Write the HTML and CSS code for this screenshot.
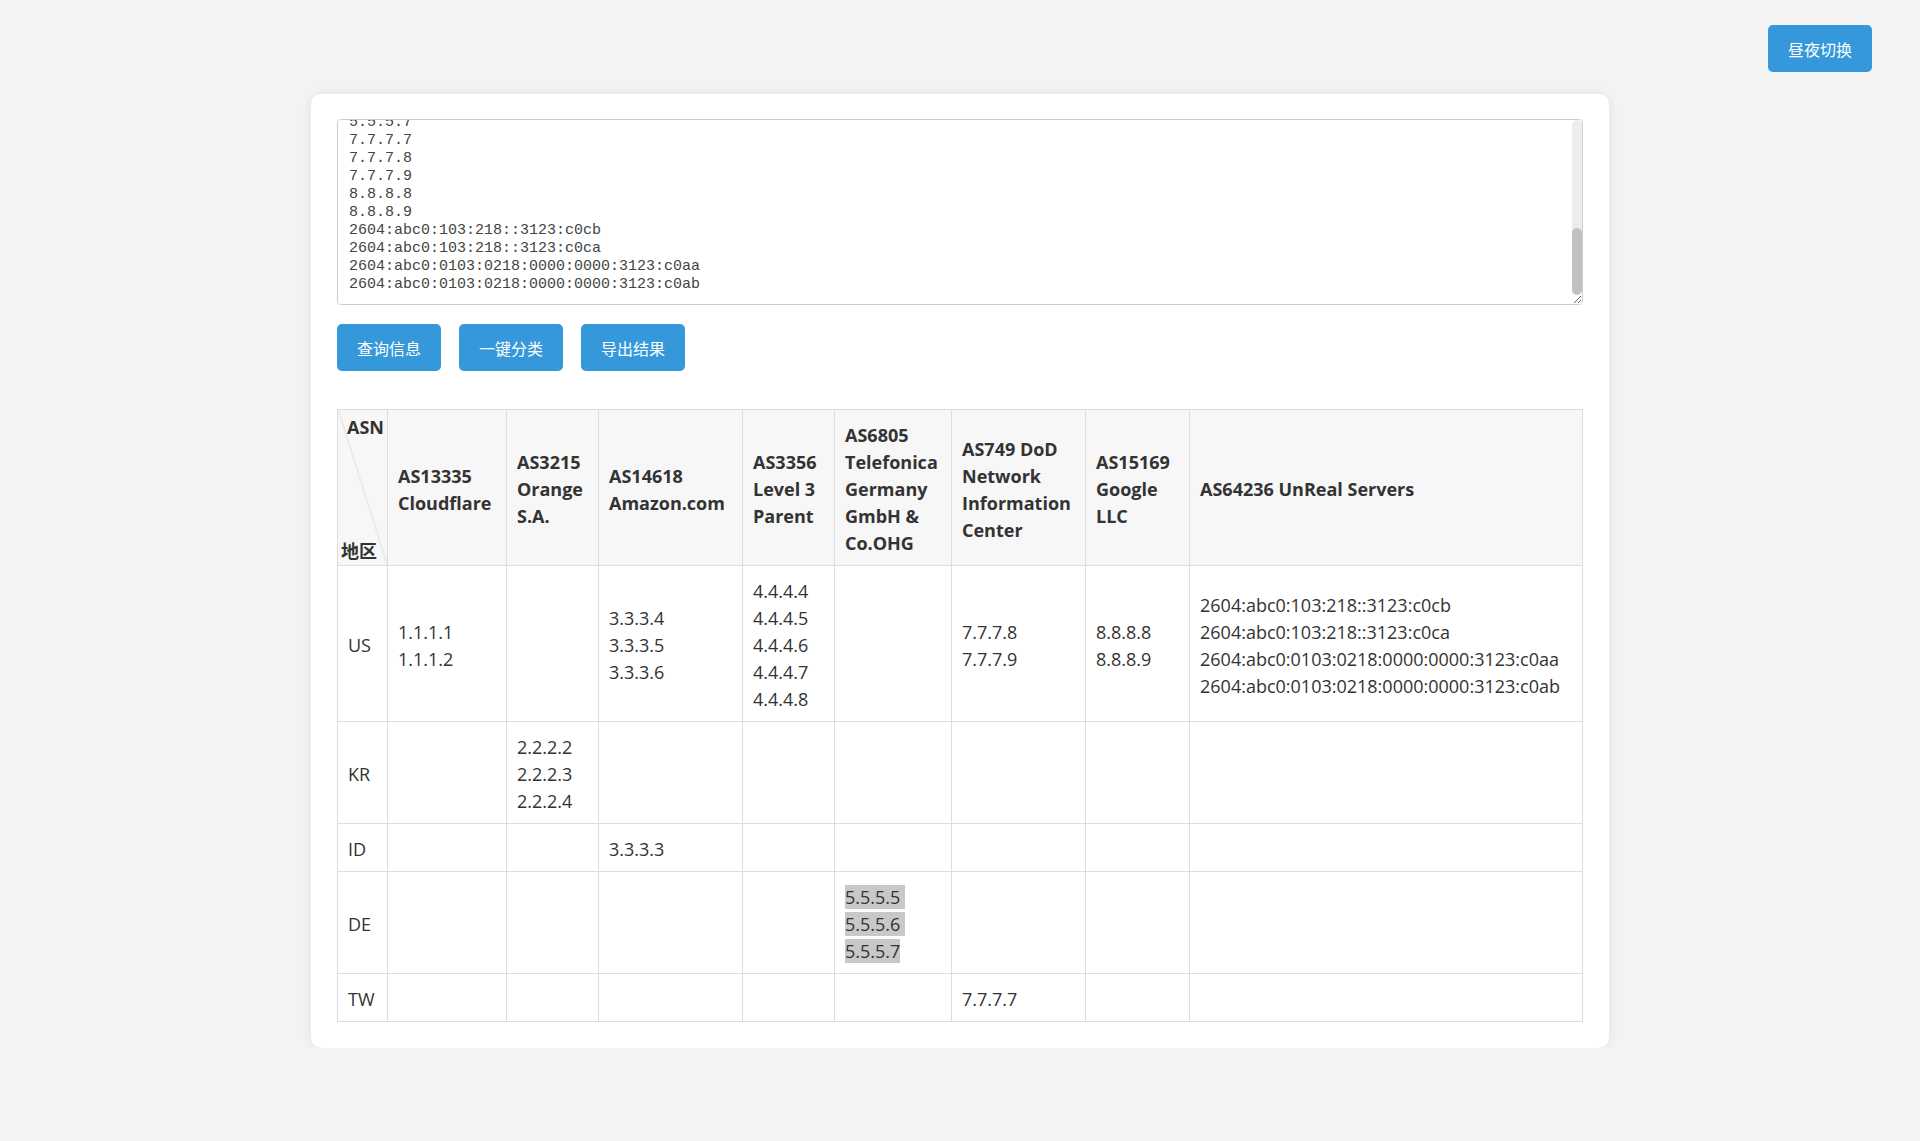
FILE: index.html
```html
<!DOCTYPE html>
<html lang="zh-CN">
<head>
    <meta charset="UTF-8">
    <meta name="viewport" content="width=device-width, initial-scale=1.0">
    <title>ASN 分类</title>
    <link rel="stylesheet" href="styles.css">
</head>
<body>
    <!-- 顶部：主题切换 -->
    <div class="top-bar">
        <button class="btn" onclick="toggleTheme()">昼夜切换</button>
    </div>

    <div class="container">
        <div class="input-wrap">
            <textarea id="ipInput" class="ip-input" spellcheck="false">1.1.1.1
1.1.1.2
2.2.2.2
2.2.2.3
2.2.2.4
3.3.3.3
3.3.3.4
3.3.3.5
3.3.3.6
4.4.4.4
4.4.4.5
4.4.4.6
4.4.4.7
4.4.4.8
5.5.5.5
5.5.5.6
5.5.5.7
7.7.7.7
7.7.7.8
7.7.7.9
8.8.8.8
8.8.8.9
2604:abc0:103:218::3123:c0cb
2604:abc0:103:218::3123:c0ca
2604:abc0:0103:0218:0000:0000:3123:c0aa
2604:abc0:0103:0218:0000:0000:3123:c0ab</textarea>
            <!-- 滚动条 -->
            <div class="scroll-track" aria-hidden="true">
                <div class="scroll-thumb"></div>
            </div>
        </div>

        <div class="actions">
            <button class="btn">查询信息</button>
            <button class="btn">一键分类</button>
            <button class="btn">导出结果</button>
        </div>

        <table class="result-table">
            <colgroup>
                <col class="col-area">
                <col class="col-w119">
                <col class="col-w92">
                <col class="col-w144">
                <col class="col-w92">
                <col class="col-w117">
                <col class="col-w134">
                <col class="col-w104">
                <col>
            </colgroup>
            <thead>
                <tr>
                    <th class="corner">
                        <div class="corner-inner">
                            <span class="corner-asn">ASN</span>
                            <span class="corner-area">地区</span>
                        </div>
                    </th>
                    <th>AS13335 Cloudflare</th>
                    <th>AS3215 Orange S.A.</th>
                    <th>AS14618 Amazon.com</th>
                    <th>AS3356 Level 3 Parent</th>
                    <th>AS6805 Telefonica Germany GmbH &amp; Co.OHG</th>
                    <th>AS749 DoD Network Information Center</th>
                    <th>AS15169 Google LLC</th>
                    <th>AS64236 UnReal Servers</th>
                </tr>
            </thead>
            <tbody>
                <tr>
                    <td>US</td>
                    <td>1.1.1.1<br>1.1.1.2</td>
                    <td></td>
                    <td>3.3.3.4<br>3.3.3.5<br>3.3.3.6</td>
                    <td>4.4.4.4<br>4.4.4.5<br>4.4.4.6<br>4.4.4.7<br>4.4.4.8</td>
                    <td></td>
                    <td>7.7.7.8<br>7.7.7.9</td>
                    <td>8.8.8.8<br>8.8.8.9</td>
                    <td>2604:abc0:103:218::3123:c0cb<br>2604:abc0:103:218::3123:c0ca<br>2604:abc0:0103:0218:0000:0000:3123:c0aa<br>2604:abc0:0103:0218:0000:0000:3123:c0ab</td>
                </tr>
                <tr>
                    <td>KR</td>
                    <td></td>
                    <td>2.2.2.2<br>2.2.2.3<br>2.2.2.4</td>
                    <td></td>
                    <td></td>
                    <td></td>
                    <td></td>
                    <td></td>
                    <td></td>
                </tr>
                <tr>
                    <td>ID</td>
                    <td></td>
                    <td></td>
                    <td>3.3.3.3</td>
                    <td></td>
                    <td></td>
                    <td></td>
                    <td></td>
                    <td></td>
                </tr>
                <tr>
                    <td>DE</td>
                    <td></td>
                    <td></td>
                    <td></td>
                    <td></td>
                    <td><span class="picked nl">5.5.5.5</span><br><span class="picked nl">5.5.5.6</span><br><span class="picked">5.5.5.7</span></td>
                    <td></td>
                    <td></td>
                    <td></td>
                </tr>
                <tr>
                    <td>TW</td>
                    <td></td>
                    <td></td>
                    <td></td>
                    <td></td>
                    <td></td>
                    <td>7.7.7.7</td>
                    <td></td>
                    <td></td>
                </tr>
            </tbody>
        </table>
    </div>

    <script>
        // 切换昼夜主题
        function toggleTheme() {
            document.body.classList.toggle("dark");
        }

        // 输入框滚动到最后一行
        const ipInput = document.getElementById("ipInput");
        ipInput.scrollTop = ipInput.scrollHeight;
    </script>
</body>
</html>
```

FILE: styles.css
```css
* {
    box-sizing: border-box;
}

body {
    margin: 0;
    background-color: #f3f3f3;
    font-family: "Open Sans", "Noto Sans CJK SC", sans-serif;
    color: #333;
}

/* 按钮 */
.btn {
    height: 47px;
    padding: 0 20px;
    background-color: #3498db;
    color: #fff;
    border: none;
    border-radius: 5px;
    font-family: "Noto Sans CJK SC", sans-serif;
    font-size: 16px;
    cursor: pointer;
}

.top-bar {
    display: flex;
    justify-content: flex-end;
    padding: 25px 48px 0;
}

.top-bar .btn {
    width: 104px;
}

/* 主体卡片 */
.container {
    width: 1298px;
    margin: 22px auto 0;
    padding: 25px 26px 26px;
    background: #fff;
    border-radius: 10px;
    box-shadow: 0 0 10px rgba(0, 0, 0, 0.08);
}

.input-wrap {
    position: relative;
}

.ip-input {
    display: block;
    width: 100%;
    height: 186px;
    padding: 8px 10px 10px 11px;
    border: 1px solid #ccc;
    border-radius: 4px;
    font-family: "Liberation Mono", monospace;
    font-size: 15px;
    line-height: 18px;
    color: #444;
    resize: vertical;
    outline: none;
}

.scroll-track {
    position: absolute;
    top: 1px;
    right: 1px;
    bottom: 10px;
    width: 10px;
    background: #ededed;
    border-radius: 5px;
}

.scroll-thumb {
    position: absolute;
    left: 0;
    right: 0;
    bottom: 0;
    height: 67px;
    background: #c1c1c1;
    border-radius: 5px;
}

.actions {
    display: flex;
    gap: 18px;
    margin-top: 19px;
}

.actions .btn {
    width: 104px;
}

/* 结果表格 */
.result-table {
    width: 100%;
    margin-top: 38px;
    border-collapse: collapse;
    table-layout: fixed;
    font-size: 18px;
    line-height: 27px;
}

.col-area { width: 50px; }
.col-w119 { width: 119px; }
.col-w92 { width: 92px; }
.col-w144 { width: 144px; }
.col-w117 { width: 117px; }
.col-w134 { width: 134px; }
.col-w104 { width: 104px; }

.result-table th,
.result-table td {
    border: 1px solid #ddd;
    padding: 12px 10px 8px;
    text-align: left;
    vertical-align: middle;
    word-wrap: break-word;
}

.result-table th {
    background-color: #f7f7f7;
    font-weight: 700;
}

/* 左上角斜线表头 */
.result-table th.corner {
    padding: 5px 3px 2px;
    background: linear-gradient(to top right, #f7f7f7 calc(50% - 0.7px), #d6d6d6 50%, #f7f7f7 calc(50% + 0.7px));
}

.corner-inner {
    display: flex;
    flex-direction: column;
    justify-content: space-between;
    height: 146px;
    line-height: 22px;
}

.corner-asn {
    align-self: flex-end;
}

.corner-area {
    align-self: flex-start;
}

/* 选中的地址 */
.picked {
    background-color: #c8c8c8;
}

.picked.nl {
    padding-right: 5px;
}
```
